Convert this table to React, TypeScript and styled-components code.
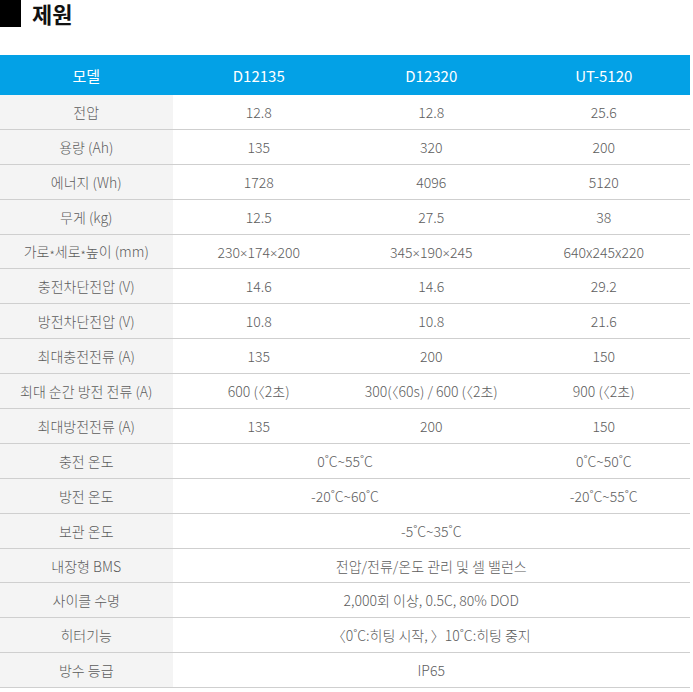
import styled, { createGlobalStyle } from 'styled-components'

const GlobalStyle = createGlobalStyle`
  body {
    margin: 0;
    background: #fff;
    font-family: "Noto Sans CJK KR", "Noto Sans", sans-serif;
  }
`

const Page = styled.div`
  width: 693px;
`

const TitleRow = styled.div`
  display: flex;
  align-items: center;
  height: 27px;
  gap: 11px;
`

const TitleMark = styled.span`
  width: 21px;
  height: 27px;
  background: #000;
`

const Title = styled.h2`
  margin: 0;
  font-size: 22px;
  font-weight: 700;
  color: #111;
  line-height: 27px;
`

const Table = styled.table`
  margin-top: 28px;
  width: 690px;
  border-collapse: collapse;
  table-layout: fixed;
`

const HeadCell = styled.th`
  background: #03a1e6;
  color: #fff;
  height: 40px;
  padding: 0;
  font-size: 15px;
  font-weight: 400;
  text-align: center;
`

const Row = styled.tr`
  border-bottom: 1px solid #cfcfcf;
`

const Cell = styled.td<{ $label?: boolean }>`
  background: ${(p) => (p.$label ? '#f4f4f4' : '#fff')};
  color: #5c5c5c;
  height: 33.9px;
  padding: 0;
  font-size: 14px;
  font-weight: 300;
  text-align: center;
`

const Times = styled.span`
  font-family: "Noto Sans", sans-serif;
  font-size: 13px;
`

const Star = styled.span`
  font-size: 12px;
  vertical-align: -3px;
`

type Spec = { label: string; values: { text: string; span?: number }[] }

const specs: Spec[] = [
  { label: '전압', values: [{ text: '12.8' }, { text: '12.8' }, { text: '25.6' }] },
  { label: '용량 (Ah)', values: [{ text: '135' }, { text: '320' }, { text: '200' }] },
  { label: '에너지 (Wh)', values: [{ text: '1728' }, { text: '4096' }, { text: '5120' }] },
  { label: '무게 (kg)', values: [{ text: '12.5' }, { text: '27.5' }, { text: '38' }] },
  { label: '가로*세로*높이 (mm)', values: [{ text: '230×174×200' }, { text: '345×190×245' }, { text: '640x245x220' }] },
  { label: '충전차단전압 (V)', values: [{ text: '14.6' }, { text: '14.6' }, { text: '29.2' }] },
  { label: '방전차단전압 (V)', values: [{ text: '10.8' }, { text: '10.8' }, { text: '21.6' }] },
  { label: '최대충전전류 (A)', values: [{ text: '135' }, { text: '200' }, { text: '150' }] },
  { label: '최대 순간 방전 전류 (A)', values: [{ text: '600 (〈2초)' }, { text: '300(〈60s) / 600 (〈2초)' }, { text: '900 (〈2초)' }] },
  { label: '최대방전전류 (A)', values: [{ text: '135' }, { text: '200' }, { text: '150' }] },
  { label: '충전 온도', values: [{ text: '0˚C~55˚C', span: 2 }, { text: '0˚C~50˚C' }] },
  { label: '방전 온도', values: [{ text: '-20˚C~60˚C', span: 2 }, { text: '-20˚C~55˚C' }] },
  { label: '보관 온도', values: [{ text: '-5˚C~35˚C', span: 3 }] },
  { label: '내장형 BMS', values: [{ text: '전압/전류/온도 관리 및 셀 밸런스', span: 3 }] },
  { label: '사이클 수명', values: [{ text: '2,000회 이상, 0.5C, 80% DOD', span: 3 }] },
  { label: '히터기능', values: [{ text: '〈0˚C:히팅 시작, 〉10˚C:히팅 중지', span: 3 }] },
  { label: '방수 등급', values: [{ text: 'IP65', span: 3 }] },
]

// ×, * 기호만 따로 모양을 맞춤
function renderText(text: string) {
  const parts = text.split(/([×*])/)
  return parts.map((part, i) => {
    if (part === '×') return <Times key={i}>×</Times>
    if (part === '*') return <Star key={i}>*</Star>
    return <span key={i}>{part}</span>
  })
}

export default function App() {
  return (
    <Page>
      <GlobalStyle />
      <TitleRow>
        <TitleMark />
        <Title>제원</Title>
      </TitleRow>
      <Table>
        <thead>
          <tr>
            <HeadCell>모델</HeadCell>
            <HeadCell>D12135</HeadCell>
            <HeadCell>D12320</HeadCell>
            <HeadCell>UT-5120</HeadCell>
          </tr>
        </thead>
        <tbody>
          {specs.map((s) => (
            <Row key={s.label}>
              <Cell $label>{renderText(s.label)}</Cell>
              {s.values.map((v, i) => (
                <Cell key={i} colSpan={v.span ?? 1}>{renderText(v.text)}</Cell>
              ))}
            </Row>
          ))}
        </tbody>
      </Table>
    </Page>
  )
}
